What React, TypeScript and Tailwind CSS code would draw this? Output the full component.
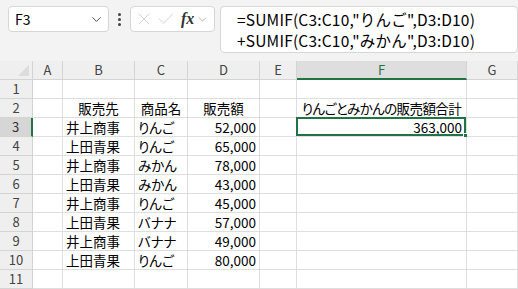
import { ChevronDown, X, Check } from 'lucide-react';

const cols = ['A', 'B', 'C', 'D', 'E', 'F', 'G'];

const rows: { b: string; c: string; d: string }[] = [
  { b: '井上商事', c: 'りんご', d: '52,000' },
  { b: '上田青果', c: 'りんご', d: '65,000' },
  { b: '井上商事', c: 'みかん', d: '78,000' },
  { b: '上田青果', c: 'みかん', d: '43,000' },
  { b: '井上商事', c: 'りんご', d: '45,000' },
  { b: '上田青果', c: 'バナナ', d: '57,000' },
  { b: '井上商事', c: 'バナナ', d: '49,000' },
  { b: '上田青果', c: 'りんご', d: '80,000' },
];

const font = { fontFamily: '"Noto Sans CJK JP", "Noto Sans", sans-serif' };

function Cell({ children, align = 'left', className = '' }: { children?: React.ReactNode; align?: 'left' | 'center' | 'right'; className?: string }) {
  const a = align === 'right' ? 'justify-end pr-[3px]' : align === 'center' ? 'justify-center' : 'justify-start pl-[3px]';
  return (
    <div className={`relative flex items-center border-r border-b border-[#dedede] bg-white text-[13.5px] text-black whitespace-nowrap [font-feature-settings:"palt"] ${a} ${className}`}>
      {children}
    </div>
  );
}

function RowHead({ n, active = false }: { n: number; active?: boolean }) {
  return (
    <div
      className={`flex items-center justify-center border-r border-b border-[#d4d4d4] text-[13px] ${
        active ? 'bg-[#d6d6d6] text-[#333] border-r-2 border-r-[#217346]' : 'bg-[#efefef] text-[#444]'
      }`}
    >
      {n}
    </div>
  );
}

export default function App() {
  return (
    <div className="w-[518px] h-[289px] overflow-hidden bg-[#f3f3f3]" style={font}>
      {/* formula bar */}
      <div className="flex items-start h-[61px] pt-[6px] pl-[8px] gap-0">
        <div className="flex items-center justify-between w-[101px] h-[26px] bg-white border border-[#d6d6d6] rounded-[4px] pl-[6px] pr-[4px]">
          <span className="text-[14px] text-black">F3</span>
          <ChevronDown size={15} strokeWidth={1.6} className="text-[#555]" />
        </div>
        <div className="flex flex-col items-center justify-center gap-[2px] w-[21px] h-[26px]">
          <span className="w-[3px] h-[3px] rounded-full bg-[#444]" />
          <span className="w-[3px] h-[3px] rounded-full bg-[#444]" />
          <span className="w-[3px] h-[3px] rounded-full bg-[#444]" />
        </div>
        <div className="flex items-center w-[85px] h-[26px] bg-white border border-[#d6d6d6] rounded-[4px] pl-[3px] gap-[2px]">
          <X size={20} strokeWidth={1} className="text-[#c8c8c8]" />
          <Check size={20} strokeWidth={1} className="text-[#c8c8c8]" />
          <span className="ml-[3px] text-[16px] italic text-[#333] font-bold" style={{ fontFamily: '"Liberation Serif", serif' }}>
            fx
          </span>
          <ChevronDown size={13} strokeWidth={1.4} className="text-[#999]" />
        </div>
        <div className="ml-[5px] w-[298px] h-[47px] bg-white border border-[#d6d6d6] rounded-[4px] pl-[16px] pt-[2px] text-[15.5px] leading-[21px] text-black tracking-[0.2px]">
          <div>=SUMIF(C3:C10,"りんご",D3:D10)</div>
          <div>+SUMIF(C3:C10,"みかん",D3:D10)</div>
        </div>
      </div>

      {/* grid */}
      <div className="grid grid-cols-[33px_30px_72px_53px_72px_37px_170px_51px] auto-rows-[19px]">
        {/* header row */}
        <div className="relative bg-[#efefef] border-r border-b border-[#d4d4d4]">
          <div className="absolute right-[3px] bottom-[3px] w-0 h-0 border-l-[11px] border-l-transparent border-b-[11px] border-b-[#dcdcdc]" />
        </div>
        {cols.map((c) => (
          <div
            key={c}
            className={`flex items-center justify-center border-r border-[#d4d4d4] text-[13px] ${
              c === 'F'
                ? 'bg-[#dedede] text-[#217346] border-b-2 border-b-[#217346]'
                : 'bg-[#efefef] text-[#444] border-b border-b-[#d4d4d4]'
            }`}
          >
            {c}
          </div>
        ))}

        {/* row 1 */}
        <RowHead n={1} />
        {cols.map((c) => (
          <Cell key={c} />
        ))}

        {/* row 2 */}
        <RowHead n={2} />
        <Cell />
        <Cell align="center">販売先</Cell>
        <Cell align="center">商品名</Cell>
        <Cell align="center">販売額</Cell>
        <Cell />
        <Cell align="center" className="tracking-[-0.6px]">りんごとみかんの販売額合計</Cell>
        <Cell />

        {rows.map((r, i) => (
          <div key={i} className="contents">
            <RowHead n={i + 3} active={i === 0} />
            <Cell />
            <Cell>{r.b}</Cell>
            <Cell>{r.c}</Cell>
            <Cell align="right">{r.d}</Cell>
            <Cell />
            {i === 0 ? (
              <Cell align="right">
                <span className="pr-[1px]">363,000</span>
                <div className="absolute -left-[1px] -top-[1px] right-0 bottom-0 border-2 border-[#217346] pointer-events-none" />
                <div className="absolute -right-[3px] -bottom-[3px] w-[6px] h-[6px] bg-[#217346] border border-white" />
              </Cell>
            ) : (
              <Cell />
            )}
            <Cell />
          </div>
        ))}

        {/* row 11 */}
        <RowHead n={11} />
        {cols.map((c) => (
          <Cell key={c} />
        ))}
      </div>
    </div>
  );
}
